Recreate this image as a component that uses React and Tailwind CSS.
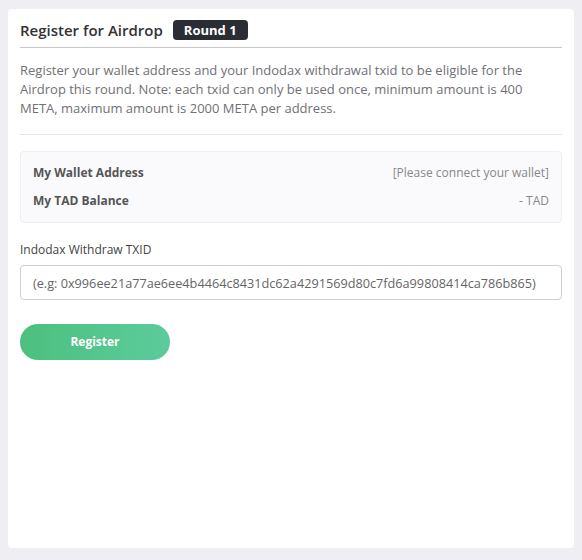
import React from 'react'

function InfoRow({ label, value }) {
  return (
    <div className="flex justify-between items-center h-7">
      <span className="font-bold text-[12px] text-[#555]">{label}</span>
      <span className="text-[12px] text-[#888]">{value}</span>
    </div>
  )
}

export default function App() {
  return (
    <div className="min-h-[560px] bg-[#efeff3] pt-[9px] px-2 pb-3" style={{ fontFamily: '"Open Sans", sans-serif' }}>
      <div className="bg-white h-[539px] rounded-sm px-3 pt-2">
        <div className="flex items-center gap-[10px] h-[26px]">
          <h1 className="text-[15px] font-semibold text-[#333]">Register for Airdrop</h1>
          <span className="bg-[#2a2d34] text-white text-[13px] font-bold px-[11px] h-5 leading-5 rounded-[4px]">Round 1</span>
        </div>
        <div className="mt-[4px] border-t border-[#c8c8cc]"></div>
        <p className="mt-[13px] text-[13px] leading-[19px] text-[#707075]">
          Register your wallet address and your Indodax withdrawal txid to be eligible for the Airdrop this round. Note: each txid can only be used once, minimum amount is 400 META, maximum amount is 2000 META per address.
        </p>
        <div className="mt-[16px] border-t border-[#e6e6ea]"></div>

        <div className="mt-4 bg-[#fafafc] border border-[#eeeef2] rounded-[4px] px-3 py-[7px]">
          <InfoRow label="My Wallet Address" value="[Please connect your wallet]" />
          <InfoRow label="My TAD Balance" value="- TAD" />
        </div>

        <label className="block mt-[18px] text-[12px] text-[#444]">Indodax Withdraw TXID</label>
        <input
          className="mt-[6px] w-full h-[35px] border border-[#d0d0d4] rounded-[4px] px-3 text-[12.7px] text-[#333] placeholder:text-[#666] outline-none"
          placeholder="(e.g: 0x996ee21a77ae6ee4b4464c8431dc62a4291569d80c7fd6a99808414ca786b865)"
        />

        <button className="mt-[24px] w-[150px] h-9 rounded-full bg-gradient-to-r from-[#4cc07e] to-[#5ccb9c] text-white text-[12px] font-bold">
          Register
        </button>
      </div>
    </div>
  )
}
